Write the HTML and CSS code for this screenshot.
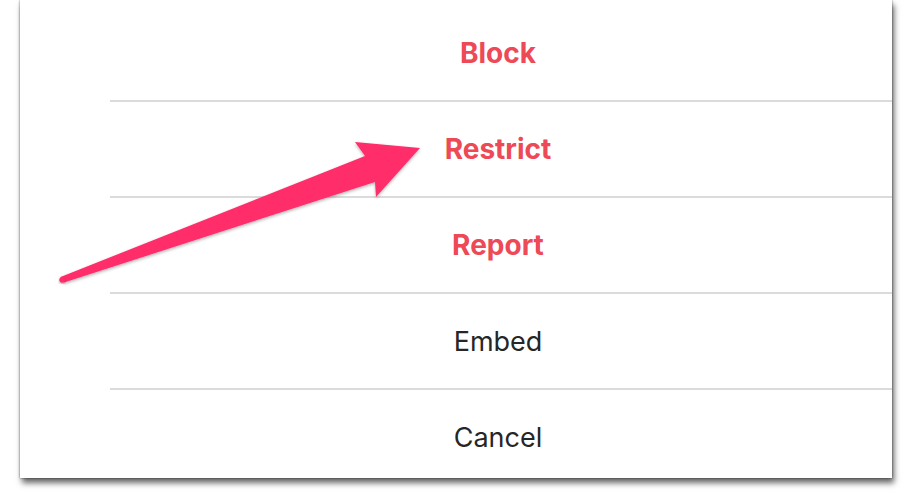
FILE: index.html
```html
<!DOCTYPE html>
<html lang="en">
  <head>
    <meta charset="UTF-8" />
    <meta name="viewport" content="width=device-width, initial-scale=1.0" />
    <title>Options</title>
    <link rel="stylesheet" href="styles.css">
  </head>
  <body>
    <div class="sheet">
      <ul class="menu">
        <li class="item danger">Block</li>
        <li class="item danger">Restrict</li>
        <li class="item danger">Report</li>
        <li class="item">Embed</li>
        <li class="item">Cancel</li>
      </ul>
    </div>
    <!-- annotation arrow -->
    <svg class="arrow" width="912" height="500" viewBox="0 0 912 500">
      <defs>
        <filter id="shade" x="-10%" y="-10%" width="120%" height="130%">
          <feDropShadow dx="0" dy="1.5" stdDeviation="1.5" flood-color="#000" flood-opacity="0.3" />
        </filter>
      </defs>
      <path filter="url(#shade)" d="M60.5 277 L365 156 L355 142 L420 148 L376 197 L375 182 L64 282.5 Z" />
      <circle filter="url(#shade)" cx="62.2" cy="279.8" r="2.9" />
    </svg>
  </body>
</html>
```
FILE: styles.css
```css
* {
  margin: 0;
  padding: 0;
}

body {
  background: #fff;
  font-family: Inter, "Liberation Sans", sans-serif;
  width: 912px;
  height: 500px;
  overflow: hidden;
}

ul {
  list-style: none;
}

.sheet {
  margin-left: 20px;
  width: 872px;
  height: 478px;
  background: #fff;
  overflow: hidden;
  box-shadow: 0 0 2px rgba(0, 0, 0, 0.55), 2px 5px 6px rgba(0, 0, 0, 0.6);
}

.menu {
  margin-top: 6px;
}

.menu .item {
  height: 94px;
  margin-left: 90px;
  padding-right: 6px;
  border-bottom: 2px solid #dbdbdb;
  display: flex;
  align-items: center;
  justify-content: center;
  font-size: 27px;
  color: #262626;
}

.menu .item:last-child {
  border-bottom: none;
}

.menu .item.danger {
  font-size: 28px;
  font-weight: 700;
  color: #ed4956;
}

.arrow {
  position: absolute;
  left: 0;
  top: 0;
  fill: #ff2d6b;
}
```
